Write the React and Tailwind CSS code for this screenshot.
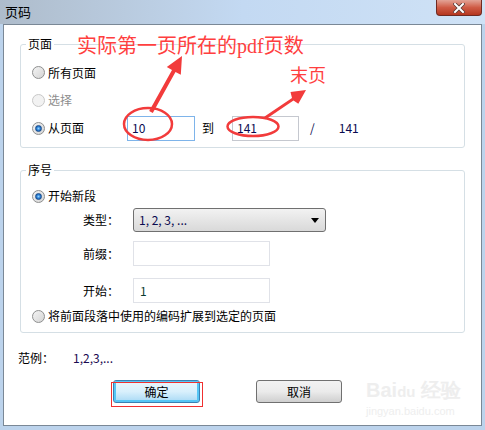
import React from 'react';

const FONT = { fontFamily: '"Noto Sans CJK SC", "Liberation Sans", sans-serif' };

const Radio = ({ checked, disabled }) => (
  <span
    className={`relative flex h-[13px] w-[13px] shrink-0 items-center justify-center rounded-full border ${
      disabled ? 'border-[#c8c8c8] bg-[#f2f2f2]' : 'border-[#8e8f8f] bg-linear-to-br from-[#f4f4f4] to-[#d4d4d4]'
    }`}
  >
    {checked && (
      <span className="h-[7px] w-[7px] rounded-full border border-[#1b4d8c] bg-radial from-[#8fd3ff] via-[#2a7fd4] to-[#0d4a9a]" />
    )}
  </span>
);

const GroupBox = ({ title, className, children }) => (
  <div className={`relative mx-[16px] rounded-[3px] border border-[#d5dfe5] ${className}`}>
    <span className="absolute -top-[9px] left-[5px] bg-white px-[2px] text-[12px] leading-[16px] text-black">
      {title}
    </span>
    {children}
  </div>
);

const Annotations = () => (
  <>
    <svg className="pointer-events-none absolute left-0 top-0" width="485" height="430">
      <ellipse cx="148" cy="124" rx="24" ry="16" fill="none" stroke="#f23b3b" strokeWidth="2.5" />
      <ellipse cx="253" cy="126.5" rx="25.5" ry="9.5" fill="none" stroke="#f23b3b" strokeWidth="2.5" />
      <polygon
        points="149.2,111 152.8,113 175.5,71.9 180.8,74.8 182,56 166.8,67 172,69.9"
        fill="#f23b3b"
      />
      <polygon
        points="264.2,116.8 265.8,119.2 293.5,100.5 298.3,103.7 306,90 290.5,92.1 292,98"
        fill="#f23b3b"
      />
      <rect x="111.5" y="382.5" width="91" height="24" fill="none" stroke="#f03030" strokeWidth="1" />
    </svg>
    <div
      className="pointer-events-none absolute left-[77px] top-[34px] text-[20px] leading-[24px] text-[#ff3f3f]"
      style={{ fontFamily: '"Liberation Serif", "Noto Sans CJK SC", serif' }}
    >
      实际第一页所在的pdf页数
    </div>
    <div
      className="pointer-events-none absolute left-[290px] top-[64px] text-[18px] leading-[24px] text-[#ff3f3f]"
      style={{ fontFamily: '"Liberation Serif", "Noto Sans CJK SC", serif' }}
    >
      末页
    </div>
    <div className="pointer-events-none absolute left-[366px] top-[378px] flex flex-col items-start text-[#eeeeee]">
      <span className="text-[20px] font-bold leading-[24px]" style={{ fontFamily: '"Liberation Sans", sans-serif' }}>
        Bai<span className="text-[15px]">du</span> 经验
      </span>
      <span className="text-[11px] leading-[14px]" style={{ fontFamily: '"Liberation Sans", sans-serif' }}>
        jingyan.baidu.com
      </span>
    </div>
  </>
);

export default function App() {
  return (
    <div
      className="relative flex h-[430px] w-[485px] flex-col overflow-hidden bg-[#bcd3ec] text-[12px] text-black"
      style={FONT}
    >
      {/* title bar */}
      <div className="flex h-[24px] shrink-0 items-start justify-between bg-linear-to-r from-[#aebccb] via-[#c3d9f2] to-[#cfe2f6]">
        <span className="pl-[5px] pt-[4px] text-[13px] leading-[16px] text-black">页码</span>
        <div className="mr-[3px] flex h-[16px] w-[46px] items-center justify-center rounded-b-[4px] border border-t-0 border-[#6f2a22] bg-linear-to-b from-[#e2a396] via-[#cf5b45] to-[#b5361f]">
          <svg width="12" height="10" viewBox="0 0 12 10">
            <path d="M2 1 L10 9 M10 1 L2 9" stroke="#5a3a36" strokeWidth="3.6" strokeLinecap="square" />
            <path d="M2 1 L10 9 M10 1 L2 9" stroke="#ffffff" strokeWidth="2" strokeLinecap="square" />
          </svg>
        </div>
      </div>

      {/* client area */}
      <div className="mx-[3px] mb-[4px] flex flex-1 flex-col border border-[#7a8896] bg-white">
        <GroupBox title="页面" className="mt-[19px] pb-[5px] pt-[14px]">
          <div className="flex h-[27px] items-center gap-[3px] pl-[11px]">
            <Radio />
            <span>所有页面</span>
          </div>
          <div className="flex h-[28px] items-center gap-[3px] pl-[11px] text-[#8d8d8d]">
            <Radio disabled />
            <span>选择</span>
          </div>
          <div className="flex h-[28px] items-center pl-[11px]">
            <div className="flex w-[95px] items-center gap-[3px]">
              <Radio checked />
              <span>从页面</span>
            </div>
            <div className="flex h-[25px] w-[68px] items-center border border-[#7eb4ea] pl-[4px] text-[#0a0a50]">10</div>
            <span className="ml-[7px]">到</span>
            <div className="ml-[18px] flex h-[25px] w-[67px] items-center border border-[#c5c8cf] pl-[4px] text-[#0a0a50]">
              141
            </div>
            <span className="ml-[11px] text-[#0a0a50]">/</span>
            <span className="ml-[24px] text-[#0a0a50]">141</span>
          </div>
        </GroupBox>

        <GroupBox title="序号" className="mt-[22px] pb-[4px] pt-[13px]">
          <div className="flex h-[24px] items-center gap-[3px] pl-[11px]">
            <Radio checked />
            <span>开始新段</span>
          </div>
          <div className="flex h-[24px] items-center pl-[62px]">
            <span className="w-[50px]">类型：</span>
            <div className="flex h-[24px] w-[193px] items-center justify-between rounded-[3px] border border-[#707070] bg-linear-to-b from-[#f2f2f2] to-[#d9d9d9] pl-[5px] pr-[6px] text-[#0a0a50]">
              <span>1, 2, 3, ...</span>
              <svg width="8" height="5" viewBox="0 0 8 5">
                <path d="M0 0 H8 L4 5 Z" fill="#000" />
              </svg>
            </div>
          </div>
          <div className="mt-[9px] flex h-[25px] items-center pl-[62px]">
            <span className="w-[50px]">前缀：</span>
            <div className="h-[25px] w-[137px] border border-[#e0e2e8]" />
          </div>
          <div className="mt-[12px] flex h-[25px] items-center pl-[62px]">
            <span className="w-[50px]">开始：</span>
            <div className="flex h-[25px] w-[137px] items-center border border-[#e0e2e8] pl-[6px] text-[#0a3a30]">1</div>
          </div>
          <div className="mt-[1px] flex h-[24px] items-center gap-[3px] pl-[11px]">
            <Radio />
            <span>将前面段落中使用的编码扩展到选定的页面</span>
          </div>
        </GroupBox>

        <div className="mt-[14px] flex h-[22px] items-center pl-[14px]">
          <span className="w-[55px]">范例：</span>
          <span className="text-[#1a0a50]">1,2,3,...</span>
        </div>

        <div className="mt-[11px] flex items-center pl-[109px]">
          <button className="flex h-[23px] w-[87px] items-center justify-center rounded-[3px] border border-[#3c7fb1] bg-linear-to-b from-[#eaf6fd] via-[#d9f0fc] to-[#a7d9f5] shadow-[inset_0_0_0_2px_#56c6f5]">
            确定
          </button>
          <button className="ml-[56px] flex h-[23px] w-[86px] items-center justify-center rounded-[3px] border border-[#707070] bg-linear-to-b from-[#f2f2f2] via-[#ebebeb] to-[#cfcfcf]">
            取消
          </button>
        </div>
      </div>

      <Annotations />
    </div>
  );
}
